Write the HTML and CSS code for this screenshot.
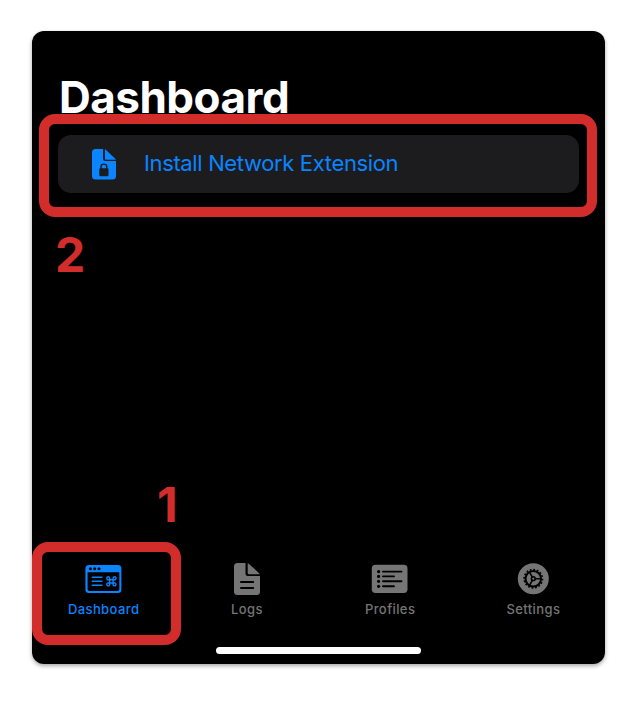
FILE: index.html
```html
<!DOCTYPE html>
<html lang="en">
<head>
<meta charset="utf-8">
<title>Dashboard</title>
<link rel="stylesheet" href="styles.css">
</head>
<body>
<main class="screen">
  <h1 class="title"><span>Dashboard</span></h1>
  <a class="card">
    <svg class="card-icon" width="24" height="31" viewBox="0 0 24 31">
      <path fill="currentColor" d="M3.500 0H11V9.500Q11 12 13.500 12H24V27Q24 30.500 20.500 30.500H3.500Q0 30.500 0 27V3.500Q0 0 3.500 0Z"/>
      <path fill="currentColor" d="M13 .3Q13.600 .5 14.300 1.200L23 9.500Q23.600 10.100 23.800 10.700H14Q13 10.700 13 9.700Z"/>
      <rect class="cut" x="7.300" y="19.300" width="9.200" height="8" rx="1.200"/>
      <path class="cut-line" stroke-width="1.400" d="M9 20V17.800C9 14.200 14.800 14.200 14.800 17.800V20"/>
    </svg>
    <span class="card-label">Install Network Extension</span>
  </a>
  <nav class="tabs">
    <a class="tab active">
      <svg width="38" height="34" viewBox="84.600 562 38 34">
        <path fill="currentColor" fill-rule="evenodd" d="M88.500 565H117.500Q121 565 121 568.500V589.500Q121 593 117.500 593H88.500Q85 593 85 589.500V568.500Q85 565 88.500 565ZM87.200 572.200V589.200Q87.200 591 89 591H117Q118.900 591 118.900 589.200V572.200Z"/>
        <g class="dot"><circle cx="90" cy="568.700" r="1.500"/><circle cx="94.300" cy="568.700" r="1.500"/><circle cx="98.600" cy="568.700" r="1.500"/></g>
        <g fill="none" stroke="currentColor" stroke-linecap="round">
          <path stroke-width="1.600" d="M91.900 577.300H101.500M91.900 581.300H101.500M91.900 585.300H101.500"/>
          <path stroke-width="1.400" d="M109.300 579.700H112.700V583H109.300ZM109.300 579.700H108A1.450 1.450 0 1 1 109.300 578.300ZM112.700 579.700V578.300A1.450 1.450 0 1 1 114 579.700ZM109.300 583V584.400A1.450 1.450 0 1 1 108 583ZM112.700 583H114A1.450 1.450 0 1 1 112.700 584.400Z"/>
        </g>
      </svg>
      <span class="label">Dashboard</span>
    </a>
    <a class="tab">
      <svg width="38" height="34" viewBox="228 562 38 34">
        <path fill="currentColor" d="M237.500 563H245.500V573.500Q245.500 576 248 576H260V591.500Q260 595 256.500 595H237.500Q234 595 234 591.500V566.500Q234 563 237.500 563Z"/>
        <path fill="currentColor" d="M247.700 563.200Q248.300 563.400 249 564L258.800 572.900Q259.500 573.500 259.700 574.200H248.700Q247.700 574.200 247.700 573.200Z"/>
        <path class="cut-line" stroke-width="2" d="M241 582.100H253.200M241 587.900H253.200"/>
      </svg>
      <span class="label">Logs</span>
    </a>
    <a class="tab">
      <svg width="38" height="34" viewBox="371 562 38 34">
        <rect fill="currentColor" x="371.800" y="564.800" width="35.700" height="28.200" rx="3.700"/>
        <path class="cut-line" stroke-width="1.900" d="M383 571.600H401.500M383 576.400H394M383 581.300H401.500M383 586.300H394"/>
        <g class="dot"><circle cx="378.600" cy="571.600" r="1.600"/><circle cx="378.600" cy="576.400" r="1.600"/><circle cx="378.600" cy="581.300" r="1.600"/><circle cx="378.600" cy="586.300" r="1.600"/></g>
      </svg>
      <span class="label">Profiles</span>
    </a>
    <a class="tab">
      <svg width="38" height="34" viewBox="514 562 38 34">
        <circle fill="currentColor" cx="533.300" cy="578.700" r="15.500"/>
        <circle class="cut-line" cx="533.300" cy="578.700" r="7.800" stroke-width="2"/>
        <circle class="teeth" cx="533.300" cy="578.700" r="9.200" pathLength="32"/>
        <circle class="cut-line" cx="533.300" cy="578.700" r="1.900" stroke-width="1.500"/>
        <path class="cut-line" stroke-width="1.600" d="M535.200 578.700H541M532.350 577.050L529.500 572.100M532.350 580.350L529.500 585.300"/>
      </svg>
      <span class="label">Settings</span>
    </a>
  </nav>
  <div class="home-bar"></div>
  <div class="callout callout-install"></div>
  <div class="callout callout-tab"></div>
  <span class="step step-two">2</span>
  <span class="step step-one">1</span>
</main>
</body>
</html>
```
FILE: styles.css
```css
* { box-sizing: border-box; }
body {
  margin: 0;
  padding: 31px 32px;
  background: #fff;
  font-family: Inter, "Liberation Sans", sans-serif;
}
.screen {
  position: relative;
  display: flex;
  flex-direction: column;
  width: 573px;
  height: 633px;
  padding: 40px 26.400px 0;
  border-radius: 12px;
  background: #000;
  box-shadow: 0 2px 4px rgba(0, 0, 0, .35);
}
.title {
  margin: 0;
  height: 63.500px;
  padding-left: .6px;
  color: #fff;
  font-size: 44px;
  font-weight: 700;
  line-height: 53px;
  letter-spacing: -.5px;
}
.card {
  display: flex;
  align-items: center;
  height: 58.500px;
  padding-left: 33.600px;
  border-radius: 13px;
  background: #1c1c1e;
  color: #0a84ff;
}
.card-icon { margin-top: 1px; }
.card-label {
  margin: -2px 0 0 28px;
  font-size: 22px;
  letter-spacing: -.36px;
  white-space: nowrap;
}
.cut { fill: #1c1c1e; }
.dot { fill: #000; }
.cut-line { fill: none; stroke: #000; stroke-linecap: round; }
.card .cut-line { stroke: #1c1c1e; }
.teeth { fill: none; stroke: #000; stroke-width: 1.600; stroke-dasharray: 1 1; }
.tabs {
  display: grid;
  grid-template-columns: repeat(4, 1fr);
  margin: auto -26.400px 0;
  height: 85px;
}
.tab {
  display: flex;
  flex-direction: column;
  align-items: center;
  color: #757575;
}
.tab svg { margin-bottom: 5px; }
.tab.active { color: #0a84ff; }
.label {
  font-size: 13px;
  font-weight: 500;
  line-height: 16px;
  letter-spacing: .4px;
}
.home-bar {
  align-self: center;
  width: 205px;
  height: 7px;
  margin-bottom: 10px;
  border-radius: 4px;
  background: #fff;
}
.callout {
  position: absolute;
  border: 10px solid #d32d2b;
  border-radius: 16px;
}
.callout-install { left: 7px; top: 83px; width: 558px; height: 103px; }
.callout-tab { left: 0; top: 511px; width: 149px; height: 103px; }
.step {
  position: absolute;
  color: #d32d2b;
  font-size: 48px;
  font-weight: 700;
  line-height: 58px;
}
.step-two { left: 23px; top: 195px; }
.step-one { left: 125px; top: 445px; }
```
